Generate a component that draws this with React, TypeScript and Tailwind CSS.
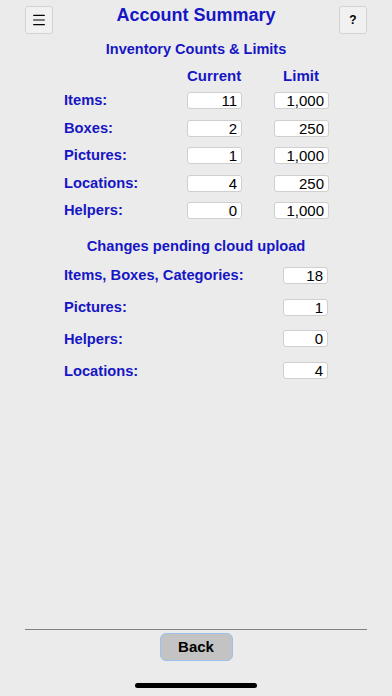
import { Menu } from 'lucide-react';

const counts = [
  { label: 'Items:', current: '11', limit: '1,000' },
  { label: 'Boxes:', current: '2', limit: '250' },
  { label: 'Pictures:', current: '1', limit: '1,000' },
  { label: 'Locations:', current: '4', limit: '250' },
  { label: 'Helpers:', current: '0', limit: '1,000' },
];

const pending = [
  { label: 'Items, Boxes, Categories:', value: '18' },
  { label: 'Pictures:', value: '1' },
  { label: 'Helpers:', value: '0' },
  { label: 'Locations:', value: '4' },
];

function ValueBox({ value, width }: { value: string; width: string }) {
  return (
    <div
      className={`${width} h-[17px] shrink-0 bg-white border border-[#cfcfcf] rounded-[3px] text-right pr-[4px] text-[15px] leading-[15px] text-black`}
    >
      {value}
    </div>
  );
}

export default function App() {
  return (
    <div
      className="h-[696px] w-[392px] bg-[#ebebeb] flex flex-col overflow-hidden"
      style={{ fontFamily: '"Liberation Sans", Arial, sans-serif' }}
    >
      {/* header */}
      <div className="flex items-start justify-between px-[25px] pt-[6px]">
        <button className="size-[28px] grid place-items-center rounded-[3px] border border-[#d2d2d2] bg-[#f1f1f1] text-black">
          <Menu className="size-[16px]" strokeWidth={1.8} />
        </button>
        <h1 className="-mt-[2px] text-[18px] leading-[22px] font-bold text-[#1616c4]">Account Summary</h1>
        <button className="size-[28px] grid place-items-center rounded-[3px] border border-[#d2d2d2] bg-[#f1f1f1] text-black text-[12px] font-bold">
          ?
        </button>
      </div>

      <h2 className="mt-[6px] text-center text-[14.5px] leading-[18px] font-bold text-[#1616c4]">
        Inventory Counts &amp; Limits
      </h2>

      <div className="mt-[9px] flex pl-[187px] text-[15px] leading-[18px] font-bold text-[#1616c4]">
        <span className="w-[54px] text-center">Current</span>
        <span className="ml-[33px] w-[54px] text-center">Limit</span>
      </div>

      <div className="mt-[7px] flex flex-col gap-[10.5px] pl-[64px]">
        {counts.map((r) => (
          <div key={r.label} className="flex items-center h-[17px]">
            <span className="w-[123px] text-[14.7px] font-bold text-[#1616c4]">{r.label}</span>
            <ValueBox value={r.current} width="w-[55px]" />
            <div className="w-[32px]" />
            <ValueBox value={r.limit} width="w-[55px]" />
          </div>
        ))}
      </div>

      <h2 className="mt-[18px] text-center text-[14.7px] leading-[18px] font-bold text-[#1616c4]">
        Changes pending cloud upload
      </h2>

      <div className="mt-[12px] flex flex-col gap-[14.7px] pl-[64px] pr-[64px]">
        {pending.map((r) => (
          <div key={r.label} className="flex items-center h-[17px]">
            <span className="flex-1 text-[14.7px] font-bold text-[#1616c4]">{r.label}</span>
            <ValueBox value={r.value} width="w-[45px]" />
          </div>
        ))}
      </div>

      <div className="flex-1" />

      <div className="mx-[25px] h-px bg-[#808080]" />
      <div className="mt-[3px] flex justify-center">
        <button className="w-[73px] h-[28px] rounded-[6px] border border-[#9cc0ee] bg-[#c3c3c3] text-[15px] font-bold text-black">
          Back
        </button>
      </div>
      <div className="mt-[22px] mb-[8px] mx-auto w-[122px] h-[5px] rounded-full bg-black" />
    </div>
  );
}
